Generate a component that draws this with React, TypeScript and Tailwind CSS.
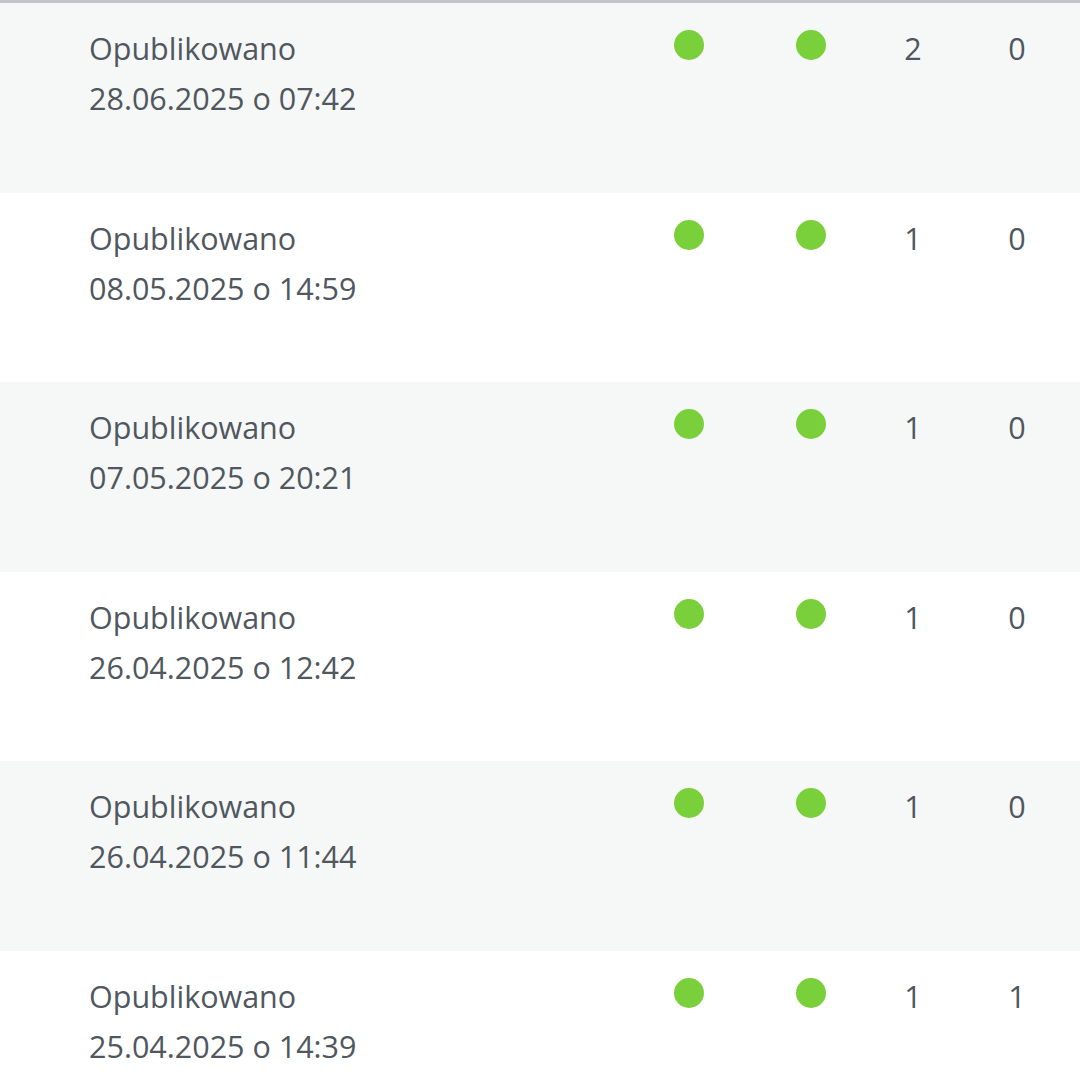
import React from "react";

type Post = { date: string; seo: boolean; read: boolean; links: number; linked: number };

const posts: Post[] = [
  { date: "28.06.2025 o 07:42", seo: true, read: true, links: 2, linked: 0 },
  { date: "08.05.2025 o 14:59", seo: true, read: true, links: 1, linked: 0 },
  { date: "07.05.2025 o 20:21", seo: true, read: true, links: 1, linked: 0 },
  { date: "26.04.2025 o 12:42", seo: true, read: true, links: 1, linked: 0 },
  { date: "26.04.2025 o 11:44", seo: true, read: true, links: 1, linked: 0 },
  { date: "25.04.2025 o 14:39", seo: true, read: true, links: 1, linked: 1 },
];

function Dot() {
  return <span className="inline-block w-[30px] h-[30px] rounded-full bg-[#7ad03a] mt-[-7px]" />;
}

export default function App() {
  return (
    <div
      className="w-[1080px] h-[1080px] overflow-hidden bg-white text-[#50575e]"
      style={{ fontFamily: '"Open Sans", "Noto Sans", sans-serif' }}
    >
      <div className="h-[3px] bg-[#c3c4c7]" />
      {posts.map((p, i) => (
        <div
          key={p.date}
          className={`grid grid-cols-[89px_539px_122px_122px_82px_126px] h-[189.5px] pt-[20px] text-[30.5px] leading-[50px] ${
            i % 2 === 0 ? "bg-[#f6f7f7]" : "bg-white"
          }`}
        >
          <div />
          <div>
            <div>Opublikowano</div>
            <div>{p.date}</div>
          </div>
          <div className="text-center">{p.seo && <Dot />}</div>
          <div className="text-center">{p.read && <Dot />}</div>
          <div className="text-center">{p.links}</div>
          <div className="text-center">{p.linked}</div>
        </div>
      ))}
    </div>
  );
}
